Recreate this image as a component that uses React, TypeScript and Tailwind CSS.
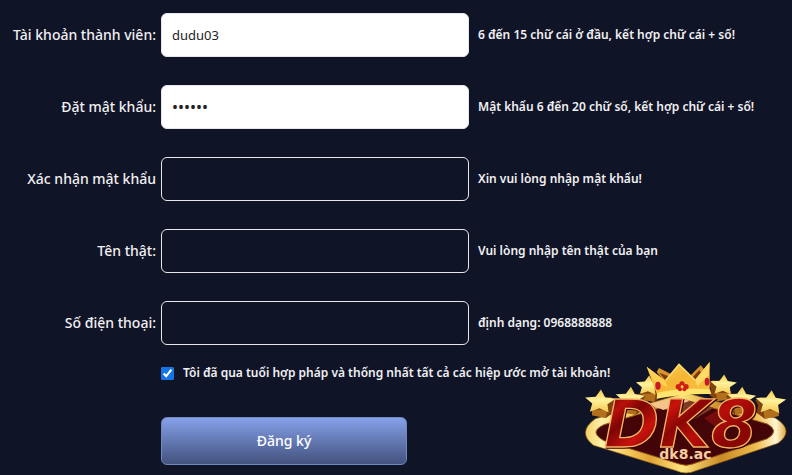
import { useState } from "react";

interface Field {
  id: string;
  label: string;
  type: string;
  hint: string;
}

const fields: Field[] = [
  {
    id: "username",
    label: "Tài khoản thành viên:",
    type: "text",
    hint: "6 đến 15 chữ cái ở đầu, kết hợp chữ cái + số!",
  },
  {
    id: "password",
    label: "Đặt mật khẩu:",
    type: "password",
    hint: "Mật khẩu 6 đến 20 chữ số, kết hợp chữ cái + số!",
  },
  {
    id: "confirm",
    label: "Xác nhận mật khẩu",
    type: "password",
    hint: "Xin vui lòng nhập mật khẩu!",
  },
  {
    id: "realName",
    label: "Tên thật:",
    type: "text",
    hint: "Vui lòng nhập tên thật của bạn",
  },
  {
    id: "phone",
    label: "Số điện thoại:",
    type: "tel",
    hint: "định dạng: 0968888888",
  },
];

const stars = [
  { x: 205, y: 108, r: 40 },
  { x: 430, y: 106, r: 42 },
  { x: 150, y: 146, r: 46 },
  { x: 484, y: 146, r: 46 },
  { x: 60, y: 156, r: 48 },
  { x: 572, y: 158, r: 48 },
];

function starPoints(cx: number, cy: number, r: number) {
  return Array.from({ length: 10 }, (_, i) => {
    const radius = i % 2 === 0 ? r : r * 0.5;
    const angle = -Math.PI / 2 + (i * Math.PI) / 5 + 0.06;
    return `${cx + radius * Math.cos(angle)},${cy + radius * 0.78 * Math.sin(angle)}`;
  }).join(" ");
}

function Logo() {
  return (
    <svg viewBox="0 0 636 375" className="w-full" role="img" aria-label="DK8 dk8.ac">
      <defs>
        <linearGradient id="gold" x1="0" y1="0" x2="1" y2="0">
          <stop offset="0" stopColor="#f3cf68" />
          <stop offset="0.08" stopColor="#fff0a8" />
          <stop offset="0.2" stopColor="#f7cf62" />
          <stop offset="0.32" stopColor="#e0a334" />
          <stop offset="0.48" stopColor="#ffe47c" />
          <stop offset="0.68" stopColor="#c98a25" />
          <stop offset="0.85" stopColor="#edbd50" />
          <stop offset="0.95" stopColor="#fff6d2" />
          <stop offset="1" stopColor="#e0a640" />
        </linearGradient>
        <linearGradient id="crown" x1="0" y1="0" x2="1" y2="1">
          <stop offset="0" stopColor="#ffdc62" />
          <stop offset="0.5" stopColor="#f6b534" />
          <stop offset="1" stopColor="#f9c245" />
        </linearGradient>
        <linearGradient id="star" x1="0" y1="0" x2="0" y2="1">
          <stop offset="0" stopColor="#f5c64c" />
          <stop offset="0.45" stopColor="#fff29a" />
          <stop offset="1" stopColor="#f3c750" />
        </linearGradient>
        <linearGradient id="red" x1="0" y1="0" x2="1" y2="0.6">
          <stop offset="0.08" stopColor="#7a0505" />
          <stop offset="0.2" stopColor="#b8100b" />
          <stop offset="0.3" stopColor="#7d0505" />
          <stop offset="0.45" stopColor="#c8130c" />
          <stop offset="0.58" stopColor="#8a0706" />
          <stop offset="0.72" stopColor="#b90e0a" />
          <stop offset="0.9" stopColor="#8a0706" />
        </linearGradient>
      </defs>

      {/* diamond sign behind the letters */}
      <path
        d="M318 128 L586 204 Q646 242 594 280 L348 362 Q318 376 288 362 L40 286 Q-10 246 46 206 Z"
        fill="url(#gold)"
        stroke="#8d5711"
        strokeWidth="2"
      />
      <path
        d="M318 150 L562 222 Q600 243 562 266 L338 342 Q318 350 298 342 L72 272 Q24 246 72 224 Z"
        fill="#430507"
        stroke="#9a5c16"
        strokeWidth="3"
      />
      <path d="M240 170 L318 150 L400 174 L330 215 Z" fill="#7d3924" />
      <path d="M205 162 L292 142 L330 152 L250 180 Z" fill="#f4c58b" />
      <path d="M372 205 L420 175 L432 250 Z" fill="#760c0c" />

      {/* stars with their extruded sides */}
      {stars.map(({ x, y, r }) => {
        const side = x < 318 ? 1 : -1;
        return (
          <g key={x}>
            <path
              d={`M${x} ${y - 2} L${x + side * 30} ${y - 16} L${x + side * 46} ${y - 8} L${x + side * 38} ${y + 8} L${x + side * 42} ${y + 30} L${x + side * 18} ${y + 48} L${x - side * 24} ${y + 40} L${x - side * 24} ${y + 20} Z`}
              fill="#81420e"
            />
            <path
              d={`M${x - side * 24} ${y + 24} L${x + side * 22} ${y + 22} L${x + side * 18} ${y + 48} L${x - side * 24} ${y + 40} Z`}
              fill="#b3701c"
            />
            <polygon points={starPoints(x, y, r)} fill="url(#star)" />
          </g>
        );
      })}

      <g className="font-['DejaVu_Sans',sans-serif] font-bold">
        <text
          x="72"
          y="291"
          fontSize="200"
          fontStyle="italic"
          fill="url(#red)"
          stroke="#f0b565"
          strokeWidth="4"
          className="drop-shadow-[3px_3px_1px_#3c0404]"
        >
          DK8
        </text>
        <text x="238" y="328" fontSize="42" fill="#f3cda0">
          dk8.ac
        </text>
      </g>

      {/* crown: back points, front wall, then the rim and jewels */}
      <path d="M230 66 L237 54 L280 76 L262 104 Z" fill="#d9942a" />
      <path d="M238 68 L270 80 L260 96 Z" fill="#7b3a0c" />
      <path d="M326 82 L362 46 L374 60 L362 92 Z" fill="#d9942a" />
      <path d="M338 82 L358 60 L364 70 L350 92 Z" fill="#7b3a0c" />
      <path
        d="M200 50 L256 92 L297 43 L345 90 L389 36 L389 122 Q312 118 232 136 Z"
        fill="url(#crown)"
      />
      <path d="M256 92 L297 43 L345 90" fill="none" stroke="#ffe27a" strokeWidth="4" />
      <path d="M200 50 L256 92 L262 112 L222 90 Z" fill="#ffd050" />
      <path d="M345 90 L389 36 L386 76 L352 108 Z" fill="#ffdb66" />
      <path d="M232 128 Q310 112 389 118 L394 132 Q310 130 230 146 Z" fill="#ffe46e" />
      <ellipse cx="234" cy="107" rx="8" ry="12" fill="#c9182b" />
      <ellipse cx="381" cy="95" rx="7" ry="12" fill="#c9182b" />
      <g fill="#cf2016">
        <circle cx="306" cy="102" r="8" />
        <circle cx="295" cy="110" r="8" />
        <circle cx="318" cy="110" r="8" />
        <circle cx="300" cy="118" r="6" />
        <circle cx="313" cy="118" r="6" />
      </g>
      <circle cx="306" cy="110" r="4" fill="#ffc943" />
    </svg>
  );
}

export default function App() {
  const [values, setValues] = useState<Record<string, string>>({
    username: "dudu03",
    password: "dudu03",
  });
  const [agreed, setAgreed] = useState(true);

  return (
    <main className="relative min-h-screen bg-[#101427] pt-[13px] font-['Noto_Sans','Open_Sans',sans-serif] text-[#f0f0f2]">
      <form onSubmit={(e) => e.preventDefault()}>
        <div className="flex flex-col gap-7">
          {fields.map((field) => {
            const value = values[field.id] ?? "";
            return (
              <div
                key={field.id}
                className="grid grid-cols-[156px_minmax(0,308px)_1fr] items-center gap-x-[5px]"
              >
                <label htmlFor={field.id} className="text-right text-sm font-medium whitespace-nowrap">
                  {field.label}
                </label>
                <input
                  id={field.id}
                  type={field.type}
                  value={value}
                  aria-describedby={`${field.id}-hint`}
                  onChange={(e) => setValues({ ...values, [field.id]: e.target.value })}
                  className={`h-11 w-full rounded-md border border-[#e8e8ec] px-2.5 outline-none ${
                    field.type === "password" ? "text-base" : "text-[13px]"
                  } ${value ? "bg-white text-[#222222]" : "bg-transparent text-white"}`}
                />
                <p id={`${field.id}-hint`} className="pl-1 text-xs font-semibold">
                  {field.hint}
                </p>
              </div>
            );
          })}
        </div>

        <div className="pl-[161px]">
          <div className="mt-[18px] flex items-center gap-[9px]">
            <input
              id="agree"
              type="checkbox"
              checked={agreed}
              onChange={(e) => setAgreed(e.target.checked)}
              className="size-[13px] accent-[#1473e6]"
            />
            <label htmlFor="agree" className="text-xs leading-5 font-semibold">
              Tôi đã qua tuổi hợp pháp và thống nhất tất cả các hiệp ước mở tài khoản!
            </label>
          </div>
          <button
            type="submit"
            className="mt-[34px] h-12 w-[246px] rounded-md border border-[#7188bd] bg-linear-to-b from-[#86a2ea] to-[#43527f] text-sm font-medium text-white"
          >
            Đăng ký
          </button>
        </div>
      </form>

      <div className="pointer-events-none absolute right-0 bottom-0 w-[212px]">
        <Logo />
      </div>
    </main>
  );
}
